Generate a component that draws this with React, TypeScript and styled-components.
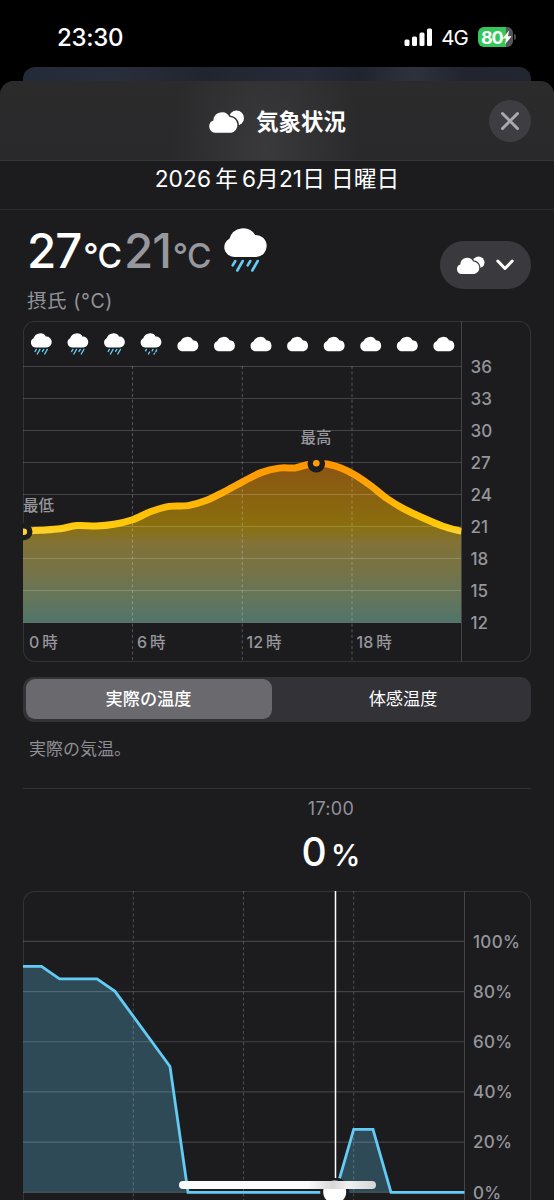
import React from "react";
import styled, { createGlobalStyle } from "styled-components";

const GlobalStyle = createGlobalStyle`
  * { box-sizing: border-box; }
  html, body { margin: 0; background: #000; }
  body {
    font-family: Inter, "Noto Sans CJK JP", sans-serif;
    color: #fff;
    overflow: hidden;
  }
  svg { display: block; flex: none; }
`;

const Screen = styled.main`
  position: relative;
  width: 554px;
  height: 1200px;
  overflow: hidden;
  background: #000;
  display: flex;
  flex-direction: column;
`;

const StatusBar = styled.header`
  height: 67px;
  flex: none;
  display: flex;
  align-items: center;
  justify-content: space-between;
  padding: 7px 38px 0 57px;
`;

const Clock = styled.time`
  font-size: 24px;
  font-weight: 500;
  letter-spacing: -0.3px;
`;

const StatusIcons = styled.div`
  display: flex;
  align-items: center;
`;

const Network = styled.span`
  font-size: 20.5px;
  font-weight: 400;
  letter-spacing: -0.9px;
  margin: 1px 10px 0 8px;
`;

const Battery = styled.div`
  width: 35px;
  height: 20px;
  border-radius: 6px;
  background: linear-gradient(90deg, #34c759 80%, #55565a 80%);
  display: flex;
  align-items: center;
  padding-left: 3px;
  font-size: 18px;
  font-weight: 700;
  letter-spacing: -1.3px;
`;

const BatteryTip = styled.i`
  width: 2px;
  height: 6px;
  margin-left: 1px;
  border-radius: 0 2px 2px 0;
  background: #48494c;
`;

const BackSheet = styled.div`
  flex: none;
  height: 30px;
  margin: 0 23px -16px;
  border-radius: 12px 12px 0 0;
  background: linear-gradient(90deg, #232a38, #292e3b 18%, #21252f 36%, #272b38 56%, #20242f 66%, #2d323d 77%, #222530 87%, #222631);
`;

const Sheet = styled.section`
  flex: 1;
  min-height: 0;
  position: relative;
  border-radius: 14px 14px 0 0;
  background: #1c1c1e;
  overflow: hidden;
`;

const SheetHeader = styled.div`
  height: 80px;
  display: grid;
  grid-template-columns: 1fr auto 1fr;
  align-items: center;
  padding: 0 23px;
  border-bottom: 1px solid #363638;
  background:
    radial-gradient(ellipse 95px 150px at 266px 70px, #3a3a3c, rgba(58, 58, 60, 0)),
    linear-gradient(#2b2b2c, #29292b);
`;

const Title = styled.h1`
  grid-column: 2;
  margin: 2px 0 0;
  display: flex;
  align-items: center;
  gap: 12px;
  font-size: 22.4px;
  line-height: 30px;
  font-weight: 700;
`;

const CloseButton = styled.button`
  justify-self: end;
  width: 42px;
  height: 42px;
  border: 0;
  border-radius: 50%;
  padding: 0;
  background: #3e3e42;
  display: grid;
  place-items: center;
`;

const DateRow = styled.div`
  height: 49px;
  display: flex;
  justify-content: center;
  border-bottom: 1px solid #2b2b2d;
  font-size: 22.7px;
  line-height: 36px;
  letter-spacing: 0.1px;
`;

const Gap = styled.span<{ $w: number }>`
  display: inline-block;
  width: ${(p) => p.$w}px;
`;

const Summary = styled.div`
  height: 111px;
  display: flex;
  justify-content: space-between;
  padding: 0 23px 0 27px;
`;

const Temps = styled.div`
  display: flex;
  height: 74px;
  padding-top: 14px;
`;

const Temp = styled.span<{ $muted?: boolean; $w: number }>`
  width: ${(p) => p.$w}px;
  white-space: nowrap;
  font-size: 47.5px;
  line-height: 53px;
  font-weight: 500;
  letter-spacing: -1.1px;
  color: ${(p) => (p.$muted ? "#97979e" : "#fff")};
`;

const Degree = styled.small`
  font-size: 33.5px;
  letter-spacing: -0.6px;
  margin-left: 2px;
`;

const Unit = styled.div`
  color: #929298;
  font-size: 19.5px;
  line-height: 35px;
  letter-spacing: 0.6px;
`;

const PickerButton = styled.button`
  margin-top: 31px;
  width: 91px;
  height: 48px;
  padding: 0 17px 0 16px;
  border: 0;
  border-radius: 24px;
  background: #3a3a3e;
  display: flex;
  align-items: center;
  justify-content: space-between;
`;

const ChartCard = styled.div<{ $height: number }>`
  height: ${(p) => p.$height}px;
  margin: 0 23px;
  border-radius: 12px;
  box-shadow: inset 0 0 0 1px #343437;
`;

const Segments = styled.div`
  height: 45px;
  margin: 15px 23px 0;
  padding: 2px 2.5px 3px;
  border-radius: 11px;
  background: #323237;
  display: flex;
  gap: 6px;
`;

const Segment = styled.button<{ $active?: boolean; $w: number }>`
  width: ${(p) => p.$w}px;
  padding: 0;
  border: 0;
  border-radius: 9px;
  background: ${(p) => (p.$active ? "#69696e" : "transparent")};
  color: #fff;
  font: ${(p) => (p.$active ? 500 : 400)} 17.2px/38px Inter, "Noto Sans CJK JP", sans-serif;
`;

const Note = styled.p`
  margin: 11px 23px 0;
  padding: 0 6px 25px;
  height: 56px;
  border-bottom: 1px solid #313134;
  color: #8e8e94;
  font-size: 17px;
  line-height: 32px;
`;

const Readout = styled.div`
  height: 102px;
  margin-left: 108px;
  display: flex;
  flex-direction: column;
  align-items: center;
`;

const ReadoutTime = styled.div`
  margin-top: 8px;
  font-size: 18px;
  line-height: 23px;
  letter-spacing: 0.3px;
  color: #929298;
`;

const ReadoutValue = styled.div`
  margin-top: 7px;
  display: flex;
  align-items: baseline;
  gap: 4px;
  font-size: 39px;
  line-height: 50px;
  font-weight: 500;
`;

const Percent = styled.small`
  font-size: 30px;
`;

const HomeIndicator = styled.div`
  position: absolute;
  left: 179px;
  top: 1181px;
  width: 197px;
  height: 8px;
  border-radius: 4px;
  background: linear-gradient(90deg, #fafafa 65%, #d8d8d8 78%, #f0f0f0 86%, #d4d4d4);
`;

const Label = styled.text<{ $size?: number }>`
  fill: #96969c;
  font-size: ${(p) => p.$size ?? 17}px;
  font-weight: 500;
`;

const SMALL_CLOUD =
  "M4.9 14.6A4.9 4.9 0 0 1 4.1 5.3A6.6 6.6 0 0 1 16 4.3A5.2 5.2 0 0 1 16.8 14.6Z";
const BIG_CLOUD =
  "M10 29A9.8 9.8 0 0 1 5.6 10.5A14.2 14.2 0 0 1 31.2 7A11 11 0 0 1 32.2 29Z";

function PartlyCloudy({ width, backdrop }: { width: number; backdrop: string }) {
  return (
    <svg width={width} height={(width * 24) / 36} viewBox="0 0 36 24" fill="#fff">
      <circle cx="28.5" cy="8" r="7.5" />
      <path
        d="M7 22.8A6.3 6.3 0 0 1 5.4 10.6A8.6 8.6 0 0 1 21.6 7A8 8 0 0 1 23.2 22.8Z"
        stroke={backdrop}
        strokeWidth="3"
        paintOrder="stroke"
      />
    </svg>
  );
}

function Drops({ light, width = 2.6 }: { light?: boolean; width?: number }) {
  return (
    <g stroke="#64cbf5" strokeWidth={width} strokeLinecap="round">
      {light ? (
        <path d="M12 33L10.3 36M18.5 38.5L16.2 42.5M25.5 33L23.8 36M33 34L31 38M28.5 41L27.5 42.5" />
      ) : (
        <path d="M11.3 33L8.7 37.3M18.7 33L13.3 42.5M26.3 33L23.7 37.3M33.7 33L28.3 42.5" />
      )}
    </g>
  );
}

function BigRain() {
  return (
    <svg width="44" height="45" viewBox="0 0 44 45" style={{ marginTop: 4 }}>
      <path d={BIG_CLOUD} fill="#fff" />
      <Drops />
    </svg>
  );
}

const PLOT_W = 438.5;
const TOP = 45.5;
const HOURLY = ["rain", "rain", "rain", "light", ...Array(8).fill("cloud")];

const TEMPS: [number, number][] = [
  [0, 210.3], [18, 209.2], [37, 207.7], [54, 204.6], [73, 205], [91, 203.3], [109.5, 198.8],
  [128, 190.5], [146, 185.4], [165, 184.6], [183, 179.6], [201, 170.8], [219.5, 160.8],
  [238, 151.6], [256, 147.1], [272, 146.9], [283, 144], [293, 142.5], [304, 143], [318, 147],
  [332, 154], [347.5, 164.5], [364, 177.5], [380, 187.3], [402, 197.8], [420, 205.2], [438.5, 210.4],
];

function smooth(p: [number, number][]) {
  let d = `M${p[0][0]} ${p[0][1]}`;
  for (let i = 0; i < p.length - 1; i++) {
    const a = p[i - 1] ?? p[i];
    const b = p[i];
    const c = p[i + 1];
    const e = p[i + 2] ?? c;
    d += `C${b[0] + (c[0] - a[0]) / 6} ${b[1] + (c[1] - a[1]) / 6} ${c[0] - (e[0] - b[0]) / 6} ${c[1] - (e[1] - b[1]) / 6} ${c[0]} ${c[1]}`;
  }
  return d;
}

function TemperatureChart() {
  const line = smooth(TEMPS);
  return (
    <svg width="508" height="341" viewBox="0 0 508 341">
      <defs>
        <linearGradient id="area" gradientUnits="userSpaceOnUse" x1="0" x2="0" y1="142" y2="301.5">
          <stop offset="0" stopColor="#8b5413" />
          <stop offset="0.36" stopColor="#8a6c0e" />
          <stop offset="0.4" stopColor="#89700f" />
          <stop offset="0.5" stopColor="#827236" />
          <stop offset="0.68" stopColor="#757347" />
          <stop offset="0.85" stopColor="#64765b" />
          <stop offset="1" stopColor="#50746a" />
        </linearGradient>
        <linearGradient id="heat" gradientUnits="userSpaceOnUse" x1="0" x2="0" y1="142" y2="212">
          <stop offset="0" stopColor="#ff9500" />
          <stop offset="0.35" stopColor="#ffa608" />
          <stop offset="0.7" stopColor="#ffc005" />
          <stop offset="0.9" stopColor="#ffca0c" />
          <stop offset="1" stopColor="#ffd230" />
        </linearGradient>
        <clipPath id="plot"><rect width={PLOT_W} height="341" /></clipPath>
      </defs>
      {HOURLY.map((kind, i) =>
        kind === "cloud" ? (
          <path
            key={i}
            d={SMALL_CLOUD}
            fill="#fff"
            transform={`translate(${7 + 36.57 * i} 14.8) scale(1.05)`}
          />
        ) : (
          <g key={i} transform={`translate(${7.8 + 36.57 * i} 12.2) scale(0.49)`}>
            <path d={BIG_CLOUD} fill="#fff" />
            <Drops light={kind === "light"} width={2.8} />
          </g>
        ),
      )}
      <path d={`${line}V301.5H0Z`} fill="url(#area)" />
      {Array.from({ length: 9 }, (_, i) => (
        <g key={i}>
          <path d={`M0 ${TOP + 32 * i}H${PLOT_W}`} stroke="#fff" strokeOpacity={i < 8 ? 0.18 : 0.22} />
          <Label x="447.5" y={TOP + 6.3 + 32 * i}>{36 - 3 * i}</Label>
        </g>
      ))}
      {[109.5, 219.3, 329].map((x) => (
        <path key={x} d={`M${x} 45V340`} stroke="#fff" strokeOpacity="0.25" strokeDasharray="3 2.6" />
      ))}
      <path d="M438.5 0V341" stroke="#454548" />
      <g clipPath="url(#plot)">
        <path d={line} fill="none" stroke="url(#heat)" strokeWidth="7" />
        <circle cx="1" cy="210.7" r="8.5" fill="#1c1c1e" />
        <circle cx="0.8" cy="210.7" r="3.3" fill="#ffd230" />
        <circle cx="293.3" cy="142.7" r="8.8" fill="#1c1c1e" />
        <circle cx="293.3" cy="142.3" r="3.3" fill="#ff9d0a" />
      </g>
      <Label $size={15.5} x="0" y="190">最低</Label>
      <Label $size={15.5} x="277.5" y="121.7">最高</Label>
      {[[6, "0"], [114, "6"], [223.5, "12"], [333.5, "18"]].map(([x, hour]) => (
        <Label key={hour} $size={16} x={x} y="327">
          {hour}<tspan dx="3" fontSize="15.5">時</tspan>
        </Label>
      ))}
    </svg>
  );
}

const RAIN_LINE =
  "M0 75.3H18.5L36.5 87.8H74L92 100.3L147 175.5L165 301.3H312.5L330.7 238.3H350L368 301.3H441.5";

function RainChart() {
  return (
    <svg width="508" height="340" viewBox="0 0 508 340">
      <path d={`${RAIN_LINE}H0Z`} fill="#2e4a56" />
      {[100, 80, 60, 40, 20, 0].map((value, i) => (
        <g key={value}>
          <path d={`M0 ${50.4 + 50.18 * i}H441.5`} stroke="#fff" strokeOpacity="0.17" strokeWidth="1.2" />
          <Label x="450" y={56.6 + 50.18 * i} letterSpacing="0.3">{value}%</Label>
        </g>
      ))}
      {[110.3, 220.5, 330.7].map((x) => (
        <path key={x} d={`M${x} 0V340`} stroke="#fff" strokeOpacity="0.22" strokeDasharray="3 2.6" />
      ))}
      <path d="M441.5 0V340" stroke="#454548" />
      <path d={RAIN_LINE} fill="none" stroke="#64cbf5" strokeWidth="2.8" />
      <circle cx="311.7" cy="301" r="14.5" fill="#1c1c1e" />
      <path d="M312.5 0V287" stroke="#fff" strokeWidth="1.5" />
      <circle cx="311.7" cy="301" r="11.5" fill="#fff" />
    </svg>
  );
}

export default function App() {
  return (
    <Screen>
      <GlobalStyle />
      <StatusBar>
        <Clock>23:30</Clock>
        <StatusIcons>
          <svg width="29" height="19" viewBox="0 0 29 19" fill="#fff">
            <rect x="0.5" y="11.5" width="5" height="6.5" rx="1.5" />
            <rect x="8" y="8.5" width="5" height="9.5" rx="1.5" />
            <rect x="15.5" y="4.5" width="5" height="13.5" rx="1.5" />
            <rect x="23" y="0.5" width="5" height="17.5" rx="1.5" />
          </svg>
          <Network>4G</Network>
          <Battery>
            80
            <svg width="10" height="15" viewBox="0 0 10 15" fill="#fff">
              <path d="M7.2 0.2L0.6 8.4H4.1L2.9 14.6L9.6 6.3H6Z" />
            </svg>
          </Battery>
          <BatteryTip />
        </StatusIcons>
      </StatusBar>
      <BackSheet />
      <Sheet>
        <SheetHeader>
          <Title>
            <PartlyCloudy width={36} backdrop="#343436" />
            気象状況
          </Title>
          <CloseButton aria-label="閉じる">
            <svg width="20" height="20" viewBox="0 0 20 20">
              <path d="M2.5 2.5L17.5 17.5M17.5 2.5L2.5 17.5" stroke="#a9a9af" strokeWidth="3" strokeLinecap="round" />
            </svg>
          </CloseButton>
        </SheetHeader>
        <DateRow>
          <span>
            2026<Gap $w={4} />年<Gap $w={4} />6月21日<Gap $w={6} />日曜日
          </span>
        </DateRow>
        <Summary>
          <div>
            <Temps>
              <Temp $w={97}>27<Degree>°C</Degree></Temp>
              <Temp $w={100} $muted>21<Degree>°C</Degree></Temp>
              <BigRain />
            </Temps>
            <Unit>摂氏 (°C)</Unit>
          </div>
          <PickerButton aria-label="気象状況">
            <PartlyCloudy width={28.5} backdrop="#3a3a3e" />
            <svg width="18" height="12" viewBox="0 0 18 12">
              <path d="M1.8 2L9 9.5L16.2 2" fill="none" stroke="#fff" strokeWidth="3" strokeLinecap="round" strokeLinejoin="round" />
            </svg>
          </PickerButton>
        </Summary>
        <ChartCard $height={341}>
          <TemperatureChart />
        </ChartCard>
        <Segments>
          <Segment $active $w={247}>実際の温度</Segment>
          <Segment $w={252}>体感温度</Segment>
        </Segments>
        <Note>実際の気温。</Note>
        <Readout>
          <ReadoutTime>17:00</ReadoutTime>
          <ReadoutValue>0<Percent>%</Percent></ReadoutValue>
        </Readout>
        <ChartCard $height={340}>
          <RainChart />
        </ChartCard>
      </Sheet>
      <HomeIndicator />
    </Screen>
  );
}
